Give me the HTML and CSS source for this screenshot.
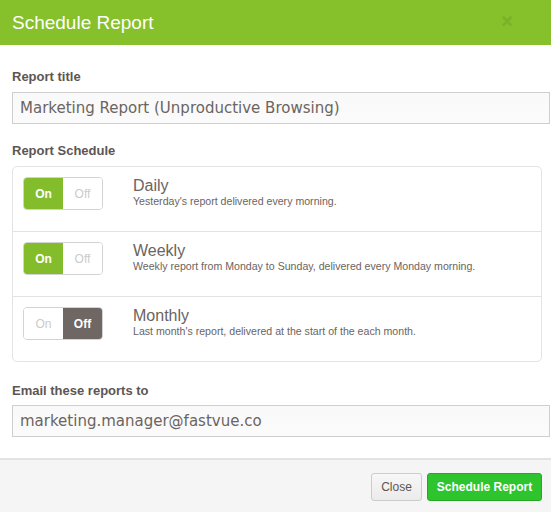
FILE: index.html
```html
<!DOCTYPE html>
<html>
<head>
<meta charset="utf-8">
<link rel="stylesheet" href="styles.css">
</head>
<body>
<div class="modal">
  <div class="header">
    <h1 class="title">Schedule Report</h1>
    <span class="close-x">×</span>
  </div>
  <div class="content">
    <div class="label first">Report title</div>
    <div class="input">Marketing Report (Unproductive Browsing)</div>
    <div class="label sched">Report Schedule</div>
    <div class="box">
      <div class="row">
        <div class="toggle"><span class="seg on-active">On</span><span class="seg off">Off</span></div>
        <div class="info">
          <div class="name">Daily</div>
          <div class="desc">Yesterday's report delivered every morning.</div>
        </div>
      </div>
      <div class="row">
        <div class="toggle"><span class="seg on-active">On</span><span class="seg off">Off</span></div>
        <div class="info">
          <div class="name">Weekly</div>
          <div class="desc">Weekly report from Monday to Sunday, delivered every Monday morning.</div>
        </div>
      </div>
      <div class="row">
        <div class="toggle"><span class="seg off">On</span><span class="seg off-active">Off</span></div>
        <div class="info">
          <div class="name">Monthly</div>
          <div class="desc">Last month's report, delivered at the start of the each month.</div>
        </div>
      </div>
    </div>
    <div class="label email">Email these reports to</div>
    <div class="input">marketing.manager@fastvue.co</div>
  </div>
  <div class="footer">
    <button class="btn btn-close">Close</button>
    <button class="btn btn-primary">Schedule Report</button>
  </div>
</div>
</body>
</html>
```
FILE: styles.css
```css
* { box-sizing: border-box; }
html, body { margin: 0; padding: 0; background: #fff; }
body { font-family: "Liberation Sans", Arial, sans-serif; color: #5d5653; }
.modal { width: 551px; height: 512px; display: flex; flex-direction: column; overflow: hidden; }
.header {
  height: 45px; background: #86c02b; display: flex; align-items: center;
  justify-content: space-between; padding: 0 38px 0 12px;
}
.title { margin: 0; font-size: 19px; font-weight: normal; color: #fff; }
.close-x { color: #78b12a; font-size: 20px; font-weight: bold; line-height: 1; margin-top: -4px; }
.content { padding: 0 9px 0 12px; flex: 1; }
.label { font-size: 13px; font-weight: bold; line-height: 18px; color: #5d5653; }
.label.first { margin-top: 23px; margin-bottom: 6px; }
.label.sched { margin-top: 18px; margin-bottom: 6px; }
.label.email { margin-top: 20px; margin-bottom: 5px; }
.input {
  width: calc(100% + 8px); height: 32px; border: 1px solid #cfcfcf;
  background: linear-gradient(#f9f9f9, #fbfbfb); padding: 0 7px;
  font-family: "DejaVu Sans", Verdana, sans-serif; font-size: 15px; line-height: 30px; color: #6b6461;
}
.box { border: 1px solid #e3e3e3; border-radius: 5px; }
.row { height: 65px; display: flex; align-items: flex-start; padding: 10px 0 0 10px; border-top: 1px solid #e3e3e3; }
.row:first-child { border-top: 0; height: 64px; }
.toggle { display: flex; width: 80px; height: 33px; border: 1px solid #d3d3d3; border-radius: 4px; overflow: hidden; flex: none; }
.seg { flex: 1; display: flex; align-items: center; justify-content: center; font-size: 12px; font-weight: bold; }
.on-active { background: #84bd2b; color: #fff; }
.off-active { background: #6e6763; color: #fff; }
.off { background: #fff; color: #cbcbcb; font-weight: normal; }
.info { margin-left: 30px; }
.name { font-size: 16px; line-height: 18px; color: #6b6461; }
.desc { font-size: 10.6px; line-height: 13px; color: #6b6461; }
.footer {
  height: 54px; border-top: 2px solid #e3e3e3; background: #f5f5f5;
  display: flex; justify-content: flex-end; align-items: flex-start; gap: 5px; padding: 13px 9px 0 0;
}
.btn { height: 28px; font-family: "Liberation Sans", Arial, sans-serif; font-size: 12px; border-radius: 3px; padding: 0; cursor: pointer; }
.btn-close { width: 51px; background: linear-gradient(#f7f7f7, #ebebeb); border: 1px solid #cccccc; color: #5d5653; }
.btn-primary { width: 115px; background: #2ec42d; border: 1px solid #25a824; color: #fff; font-weight: bold; }
```
